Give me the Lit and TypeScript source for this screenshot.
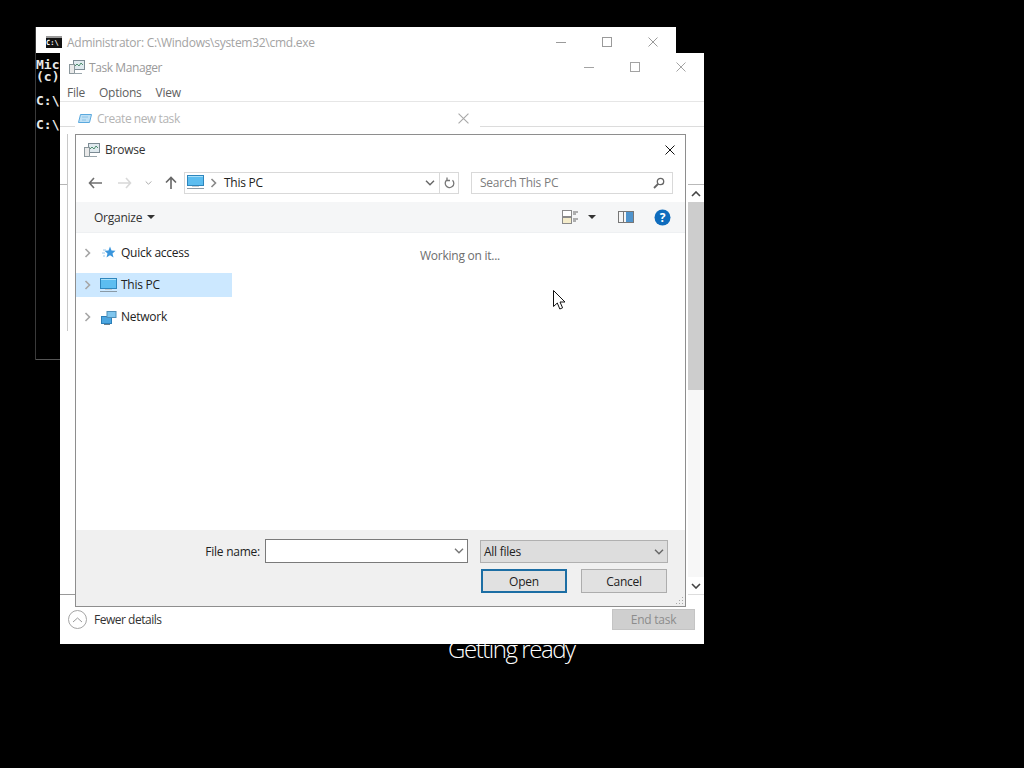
import { LitElement, html, css } from "lit";
import { customElement } from "lit/decorators.js";

const x = (s: number, c: string) => html`<svg width=${s} height=${s} viewBox="0 0 10 10"><path d="M.5.5l9 9M9.5.5l-9 9" stroke=${c} fill="none"/></svg>`;
const chevR = (c = "#a6a6a6") => html`<svg width="7" height="10" viewBox="0 0 7 10"><path d="M1.5 1l4 4-4 4" stroke=${c} stroke-width="1.6" fill="none"/></svg>`;
const chevD = (c = "#555", w = 10) => html`<svg width=${w} height="6" viewBox="0 0 10 6"><path d="M1 .8l4 4 4-4" stroke=${c} stroke-width="1.4" fill="none"/></svg>`;
const caret = html`<svg width="8" height="4" viewBox="0 0 8 4"><path d="M0 0h8L4 4z" fill="#333"/></svg>`;
const taskIcon = html`<svg width="16" height="16" viewBox="0 0 16 16"><rect x="4.5" y="1.5" width="11" height="9" fill="#dfe9ee" stroke="#7c8b94"/><path d="M6 7l2-2 2 2 2-3 2 2" stroke="#4f8f6f" fill="none"/><rect x=".5" y="5.5" width="5" height="9" fill="#e9e9e9" stroke="#8b979c"/><path d="M5 14.500h8" stroke="#9aa6ac"/></svg>`;
const pcIcon = (w = 17) => html`<svg width=${w} height=${w} viewBox="0 0 17 17"><rect x="0.500" y="1.500" width="16" height="10" fill="#5cbdf0" stroke="#2e86bd"/><path d="M1 2.500h15" stroke="#a8e0fa"/><path d="M0 14.500h17" stroke="#8a9aa6"/><path d="M5 12.500h7" stroke="#c5ccd1"/></svg>`;

const winControls = (c: string) => html`<div class="controls">
  <span class="ctl"><svg width="10" height="10" viewBox="0 0 10 10"><path d="M0 5.500h10" stroke=${c}/></svg></span>
  <span class="ctl"><svg width="10" height="10" viewBox="0 0 10 10"><rect x=".5" y=".5" width="9" height="9" fill="none" stroke=${c}/></svg></span>
  <span class="ctl">${x(10, c)}</span>
</div>`;

@customElement("app-root")
export class AppRoot extends LitElement {
  static styles = css`
    :host { display: block; width: 1024px; height: 768px; background: #000; position: relative; overflow: hidden;
      font: 12px/16px "Open Sans", "Noto Sans", sans-serif; letter-spacing: -0.25px; color: #222; }
    * { box-sizing: border-box; }
    svg { display: block; flex: none; }
    .ready { position: absolute; left: 448px; top: 631px; width: 128px; color: #fff;
      font: 300 24px/36px "Open Sans", sans-serif; letter-spacing: -1.45px; white-space: nowrap; }

    .win { position: absolute; background: #fff; }
    .bar { display: flex; align-items: center; }
    .controls { margin-left: auto; display: flex; }
    .ctl { width: 46px; display: flex; justify-content: center; }

    .cmd { left: 36px; top: 27px; width: 640px; height: 333px; display: flex; flex-direction: column; background: #000; border-bottom: 1px solid #555; box-shadow: -1px 0 0 #3a3a3a; }
    .cmd .bar { height: 26px; background: #fff; padding: 4px 0 0 10px; gap: 5px; color: #a3a3a3; letter-spacing: -0.27px; flex: none; }
    .cmd .bar .tt { padding-top: 2px; }
    .cmd-ico { width: 16px; height: 12px; background: #111; border-top: 2px solid #999; color: #fff; font: bold 7px/10px "DejaVu Sans Mono", monospace; letter-spacing: 0; overflow: hidden; }
    .console { padding: 6px 0 0 0; color: #e8e8e8; font: bold 13px/12px "DejaVu Sans Mono", monospace; letter-spacing: 0; white-space: pre; }

    .tm { left: 60px; top: 53px; width: 644px; height: 591px; display: flex; flex-direction: column; }
    .tm-title { height: 28px; padding-left: 9px; gap: 4px; color: #9a9a9a; flex: none; }
    .tm-title .t { padding-top: 2px; letter-spacing: -0.42px; }
    .menu { height: 21px; padding: 4px 0 0 7px; gap: 14px; color: #5e5e5e; border-bottom: 1px solid #e6e6e6; flex: none; }
    .tabs { height: 25px; border-bottom: 1px solid #dcdcdc; flex: none; }
    .tm-body { flex: 1; position: relative; }
    .rule-a { position: absolute; left: 0; top: 57px; width: 8px; height: 1px; background: #b5b5b5; }
    .rule-b { position: absolute; left: 7px; top: 7px; width: 1px; height: 197px; background: #c8c8c8; }
    .rule-c { position: absolute; left: 0; top: 467px; width: 16px; height: 1px; background: #999; }
    .sb { position: absolute; left: 628px; top: 57px; width: 16px; height: 411px; background: #f7f7f7; display: flex; flex-direction: column; align-items: center; border-top: 1px solid #b9b9b9; border-bottom: 1px solid #ddd; }
    .sb-btn { height: 17px; flex: none; display: flex; align-items: center; justify-content: center; align-self: stretch; background: #fff; }
    .thumb { align-self: stretch; height: 188px; background: #cdcdcd; }
    .sb-space { flex: 1; }
    .tm-foot { height: 37px; padding: 0 9px 12px 8px; gap: 7px; color: #333; flex: none; letter-spacing: -0.48px; }
    .circle { width: 19px; height: 19px; border: 1px solid #a5a5a5; border-radius: 50%; display: flex; align-items: center; justify-content: center; }
    .end { margin-left: auto; width: 83px; height: 21px; background: #cfcfcf; color: #8c8c8c; display: flex; align-items: center; justify-content: center; border: 1px solid #c4c4c4; letter-spacing: -0.25px; }

    .cnt { left: 75px; top: 105px; width: 405px; height: 29px; padding: 0 11px 0 2px; }
    .cnt .bar { height: 27px; gap: 4px; color: #b4b4b4; letter-spacing: -0.45px; }
    .cnt .close { margin-left: auto; }

    .br { left: 75px; top: 134px; width: 611px; height: 473px; border: 1px solid #8e8e8e; display: flex; flex-direction: column; }
    .br-title { height: 30px; padding: 0 10px 0 8px; gap: 5px; color: #333; flex: none; }
    .br-title .close { margin-left: auto; }
    .nav { height: 37px; flex: none; padding: 0 12px 2px 11px; }
    .nb { display: flex; justify-content: center; align-items: center; flex: none; }
    .nb.back { width: 15px; }
    .nb.fwd { width: 14px; margin-left: 16px; }
    .nb.rec { width: 8px; margin-left: 12px; }
    .nb.up { width: 14px; margin-left: 12px; }
    .addr { margin-left: 6px; width: 275px; height: 22px; border: 1px solid #d9d9d9; display: flex; align-items: center; padding-left: 2px; color: #222; }
    .addr .sep { margin: 0 7px 0 6px; }
    .addr .down { margin-left: auto; margin-right: 4px; }
    .addr .rf { width: 19px; height: 100%; border-left: 1px solid #d9d9d9; display: flex; align-items: center; justify-content: center; }
    .search { margin-left: 12px; width: 202px; height: 22px; border: 1px solid #d9d9d9; display: flex; align-items: center; padding: 0 7px 0 8px; color: #7d7d7d; }
    .search svg { margin-left: auto; }
    .tools { height: 31px; background: #f5f6f7; flex: none; border-bottom: 1px solid #eef0f2; padding: 0 14px 0 18px; }
    .tools .org { margin-right: 5px; color: #333; padding-top: 1px; }
    .tools .right { margin-left: auto; display: flex; align-items: center; }
    .tools .vcaret { margin: 0 22px 0 10px; display: block; }
    .tools .panes { margin-right: 20px; }
    .main { flex: 1; display: flex; min-height: 0; }
    .tree { width: 156px; flex: none; display: flex; flex-direction: column; padding-top: 4px; }
    .row { height: 32px; display: flex; align-items: center; position: relative; color: #222; }
    .row .hl { height: 24px; width: 100%; display: flex; align-items: center; }
    .row .hl.sel { background: #cce8ff; }
    .row .ch { width: 8px; margin: 0 8px 0 8px; display: flex; }
    .row .ic { width: 17px; margin-right: 4px; display: flex; justify-content: center; }
    .pane { flex: 1; position: relative; padding: 15px 0 0 188px; color: #6d6d6d; }
    .cursor { position: absolute; left: 321px; top: 57px; }
    .foot { height: 76px; background: #f0f0f0; flex: none; padding: 9px 17px 0 0; display: flex; flex-direction: column; gap: 6px; position: relative; }
    .foot-row { display: flex; align-items: center; justify-content: flex-end; }
    .lbl { margin-right: 5px; color: #222; padding-top: 1px; }
    .fname { width: 203px; height: 24px; background: #fff; border: 1px solid #7a7a7a; display: flex; align-items: center; justify-content: flex-end; padding-right: 3px; margin-right: 12px; }
    .ftype { width: 188px; height: 23px; background: #dddddd; border: 1px solid #b0b0b0; display: flex; align-items: center; padding: 1px 3px 0 3px; justify-content: space-between; color: #222; }
    .btn { width: 86px; height: 24px; display: flex; align-items: center; justify-content: center; background: #e1e1e1; border: 1px solid #adadad; color: #222; padding-top: 1px; }
    .btn.def { border: 2px solid #1c6ea4; margin-right: 14px; }
    .foot-row.btns { padding-right: 1px; }
    .grip { position: absolute; right: 1px; bottom: 1px; }
  `;

  render() {
    return html`
      <div class="ready">Getting ready</div>

      <div class="win cmd">
        <div class="bar">
          <span class="cmd-ico">C:\\</span>
          <span class="tt">Administrator: C:\\Windows\\system32\\cmd.exe</span>
          ${winControls("#9a9a9a")}
        </div>
        <div class="console">Mic
(c)

C:\\

C:\\</div>
      </div>

      <div class="win tm">
        <div class="bar tm-title">
          <span>${taskIcon}</span>
          <span class="t">Task Manager</span>
          ${winControls("#a3a3a3")}
        </div>
        <div class="bar menu"><span>File</span><span>Options</span><span>View</span></div>
        <div class="tabs"></div>
        <div class="tm-body">
          <div class="rule-a"></div>
          <div class="rule-b"></div>
          <div class="rule-c"></div>
          <div class="sb">
            <div class="sb-btn"><svg width="10" height="6" viewBox="0 0 10 6"><path d="M1 5l4-4 4 4" stroke="#444" stroke-width="1.6" fill="none"/></svg></div>
            <div class="thumb"></div>
            <div class="sb-space"></div>
            <div class="sb-btn"><svg width="10" height="6" viewBox="0 0 10 6"><path d="M1 1l4 4 4-4" stroke="#444" stroke-width="1.6" fill="none"/></svg></div>
          </div>
        </div>
        <div class="bar tm-foot">
          <span class="circle"><svg width="11" height="6" viewBox="0 0 11 6"><path d="M1 5l4.500-4 4.500 4" stroke="#9a9a9a" fill="none"/></svg></span>
          <span>Fewer details</span>
          <span class="end">End task</span>
        </div>
      </div>

      <div class="win cnt">
        <div class="bar">
          <span class="ico"><svg width="16" height="14" viewBox="0 0 16 14"><path d="M3.500 2.500h11l-2 8h-11z" fill="#bfe0f5" stroke="#5aa9de"/><path d="M5 5l6 0M5 8h4" stroke="#8cc4e8"/></svg></span>
          <span>Create new task</span>
          <span class="close">${x(11, "#a8a8a8")}</span>
        </div>
      </div>

      <div class="win br">
        <div class="bar br-title">
          <span>${taskIcon}</span>
          <span>Browse</span>
          <span class="close">${x(10, "#111")}</span>
        </div>
        <div class="bar nav">
          <span class="nb back"><svg width="14" height="12" viewBox="0 0 14 12"><path d="M6 1L1.500 6 6 11M2 6h12" stroke="#6f6f6f" stroke-width="1.600" fill="none"/></svg></span>
          <span class="nb fwd"><svg width="14" height="12" viewBox="0 0 14 12"><path d="M8 1l4.500 5L8 11M12 6H0" stroke="#d8d8d8" stroke-width="1.600" fill="none"/></svg></span>
          <span class="nb rec">${chevD("#a8a8a8", 7)}</span>
          <span class="nb up"><svg width="12" height="13" viewBox="0 0 12 13"><path d="M1 6.500L6 1.500l5 5M6 2v11" stroke="#666" stroke-width="1.600" fill="none"/></svg></span>
          <div class="addr">
            ${pcIcon()}
            <span class="sep">${chevR("#888")}</span>
            <span>This PC</span>
            <span class="down">${chevD("#666")}</span>
            <span class="rf"><svg width="11" height="12" viewBox="0 0 11 12"><path d="M8.500 3.200A4.300 4.300 0 1 1 3.500 2.500M3 .5v3h3" stroke="#777" stroke-width="1.300" fill="none"/></svg></span>
          </div>
          <div class="search">
            <span>Search This PC</span>
            <svg width="12" height="12" viewBox="0 0 12 12"><circle cx="7.500" cy="4.500" r="3.200" fill="none" stroke="#666" stroke-width="1.300"/><path d="M5 7l-4 4" stroke="#666" stroke-width="1.800"/></svg>
          </div>
        </div>
        <div class="bar tools">
          <span class="org">Organize</span>
          ${caret}
          <div class="right">
            <svg width="16" height="16" viewBox="0 0 16 16"><rect x=".5" y="1.500" width="9" height="6" fill="#fff" stroke="#8a8a8a"/><rect x=".5" y="8.500" width="9" height="6" fill="#f4eccb" stroke="#8a8a8a"/><path d="M11 3h5M11 5h3M11 10h5M11 12h3" stroke="#666"/></svg>
            <span class="vcaret">${caret}</span>
            <svg class="panes" width="16" height="12" viewBox="0 0 16 12"><rect x=".5" y=".5" width="15" height="11" fill="#f6f6f6" stroke="#777"/><rect x="8" y="1" width="7" height="10" fill="#4f94cd"/><path d="M5.500 1v10" stroke="#777"/></svg>
            <svg width="17" height="17" viewBox="0 0 17 17"><circle cx="8.500" cy="8.500" r="8" fill="#0f6cbd"/><text x="8.500" y="13" text-anchor="middle" fill="#fff" font-family="Open Sans" font-weight="700" font-size="12">?</text></svg>
          </div>
        </div>
        <div class="main">
          <div class="tree">
            <div class="row"><div class="hl"><span class="ch">${chevR()}</span><span class="ic"><svg width="14" height="14" viewBox="0 0 14 14"><path d="M8 .5l1.500 4 4 .3-3 2.700 1 4-3.500-2.200-3.500 2.200 1-4-3-2.700 4-.3z" fill="#3a96dd"/><path d="M1 4h3M0 7h3M1 10h2" stroke="#9cc9ea"/></svg></span><span>Quick access</span></div></div>
            <div class="row"><div class="hl sel"><span class="ch">${chevR()}</span><span class="ic">${pcIcon()}</span><span>This PC</span></div></div>
            <div class="row"><div class="hl"><span class="ch">${chevR()}</span><span class="ic"><svg width="16" height="15" viewBox="0 0 16 15"><rect x=".5" y="6.500" width="10" height="7" fill="#4ba6e0" stroke="#2c7fb8"/><rect x="6" y="1.500" width="9" height="6" fill="#7fc6ee" stroke="#4f8fb8"/><path d="M3 14.500h6" stroke="#6d7f8a"/></svg></span><span>Network</span></div></div>
          </div>
          <div class="pane">
            Working on it...
            <svg class="cursor" width="14" height="20" viewBox="0 0 14 20"><path d="M.5.500v16l3.800-3.500 2.500 6 2.800-1.200-2.600-5.800h5z" fill="#fff" stroke="#111"/></svg>
          </div>
        </div>
        <div class="foot">
          <div class="foot-row">
            <span class="lbl">File name:</span>
            <div class="fname">${chevD("#777")}</div>
            <div class="ftype"><span>All files</span>${chevD("#666")}</div>
          </div>
          <div class="foot-row btns">
            <div class="btn def">Open</div>
            <div class="btn">Cancel</div>
          </div>
          <svg class="grip" width="10" height="10" viewBox="0 0 10 10"><path d="M8 2h1v1H8zM5 5h1v1H5zM8 5h1v1H8zM2 8h1v1H2zM5 8h1v1H5zM8 8h1v1H8z" fill="#a8a8a8"/></svg>
        </div>
      </div>
    `;
  }
}
